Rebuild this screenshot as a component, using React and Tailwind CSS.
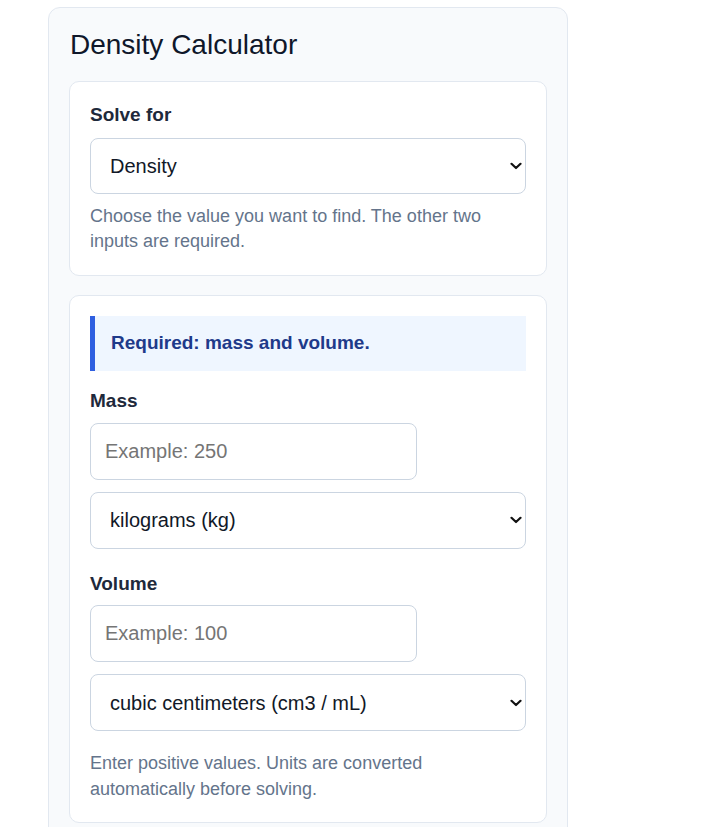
import React from "react";

function Chevron() {
  return (
    <svg
      className="pointer-events-none absolute right-[4px] top-1/2 -translate-y-1/2"
      width="12"
      height="8"
      viewBox="0 0 12 8"
      fill="none"
    >
      <path d="M1.5 1.8 L6 6 L10.5 1.8" stroke="#111" strokeWidth="2.2" strokeLinecap="round" strokeLinejoin="round" />
    </svg>
  );
}

function Select({ value, options, h, className = "" }) {
  return (
    <div className={"relative " + className}>
      <select
        defaultValue={value}
        className={`block w-full ${h} appearance-none pl-[19px] pr-[24px] text-[20px] text-[#111827] border border-[#cbd5e1] rounded-lg bg-white outline-none`}
      >
        {options.map((o) => (
          <option key={o}>{o}</option>
        ))}
      </select>
      <Chevron />
    </div>
  );
}

function Field({ label, placeholder, units, value, top }) {
  return (
    <div className={top}>
      <label className="block text-[19px] font-bold leading-[1.4] text-[#1e293b] mb-[8px]">
        {label}
      </label>
      <input
        type="text"
        placeholder={placeholder}
        className="block w-[327px] h-[57px] px-[14px] text-[20px] border border-[#cbd5e1] rounded-lg bg-white placeholder:text-[#757575] outline-none"
      />
      <Select value={value} options={units} h="h-[57px]" className="mt-[12px]" />
    </div>
  );
}

export default function App() {
  return (
    <div className="min-h-screen bg-white" style={{ fontFamily: '"Liberation Sans", Arial, sans-serif' }}>
      <div className="ml-[48px] pt-[7px] w-[520px]">
        <div className="bg-[#f8fafc] border border-[#e2e8f0] rounded-xl px-[20px] pt-[20px] pb-[20px]">
          <h1 className="text-[28px] leading-[1.2] text-[#0f172a] mb-[19px] pl-[1px]">Density Calculator</h1>

          <div className="bg-white border border-[#e2e8f0] rounded-[10px] px-[20px] pt-[20px] pb-[21px]">
            <label className="block text-[19px] font-bold leading-[1.4] text-[#1e293b] mb-[10px]">
              Solve for
            </label>
            <Select value="Density" options={["Density", "Mass", "Volume"]} h="h-[56px]" />
            <p className="mt-[10px] text-[18px] leading-[25px] text-[#64748b]">
              Choose the value you want to find. The other two inputs are required.
            </p>
          </div>

          <div className="mt-[19px] bg-white border border-[#e2e8f0] rounded-[10px] p-[20px]">
            <div className="h-[55px] flex items-center bg-[#eff6ff] border-l-[5px] border-[#2f5fe0] pl-[16px]">
              <span className="text-[19px] font-bold text-[#1e3a8a]">Required: mass and volume.</span>
            </div>

            <Field
              top="mt-[17px]"
              label="Mass"
              placeholder="Example: 250"
              value="kilograms (kg)"
              units={["kilograms (kg)", "grams (g)", "pounds (lb)"]}
            />
            <Field
              top="mt-[22px]"
              label="Volume"
              placeholder="Example: 100"
              value="cubic centimeters (cm3 / mL)"
              units={["cubic centimeters (cm3 / mL)", "liters (L)", "cubic meters (m3)"]}
            />

            <p className="mt-[19px] text-[18px] leading-[26px] text-[#64748b] pr-[80px]">
              Enter positive values. Units are converted automatically before solving.
            </p>
          </div>
        </div>
      </div>
    </div>
  );
}
